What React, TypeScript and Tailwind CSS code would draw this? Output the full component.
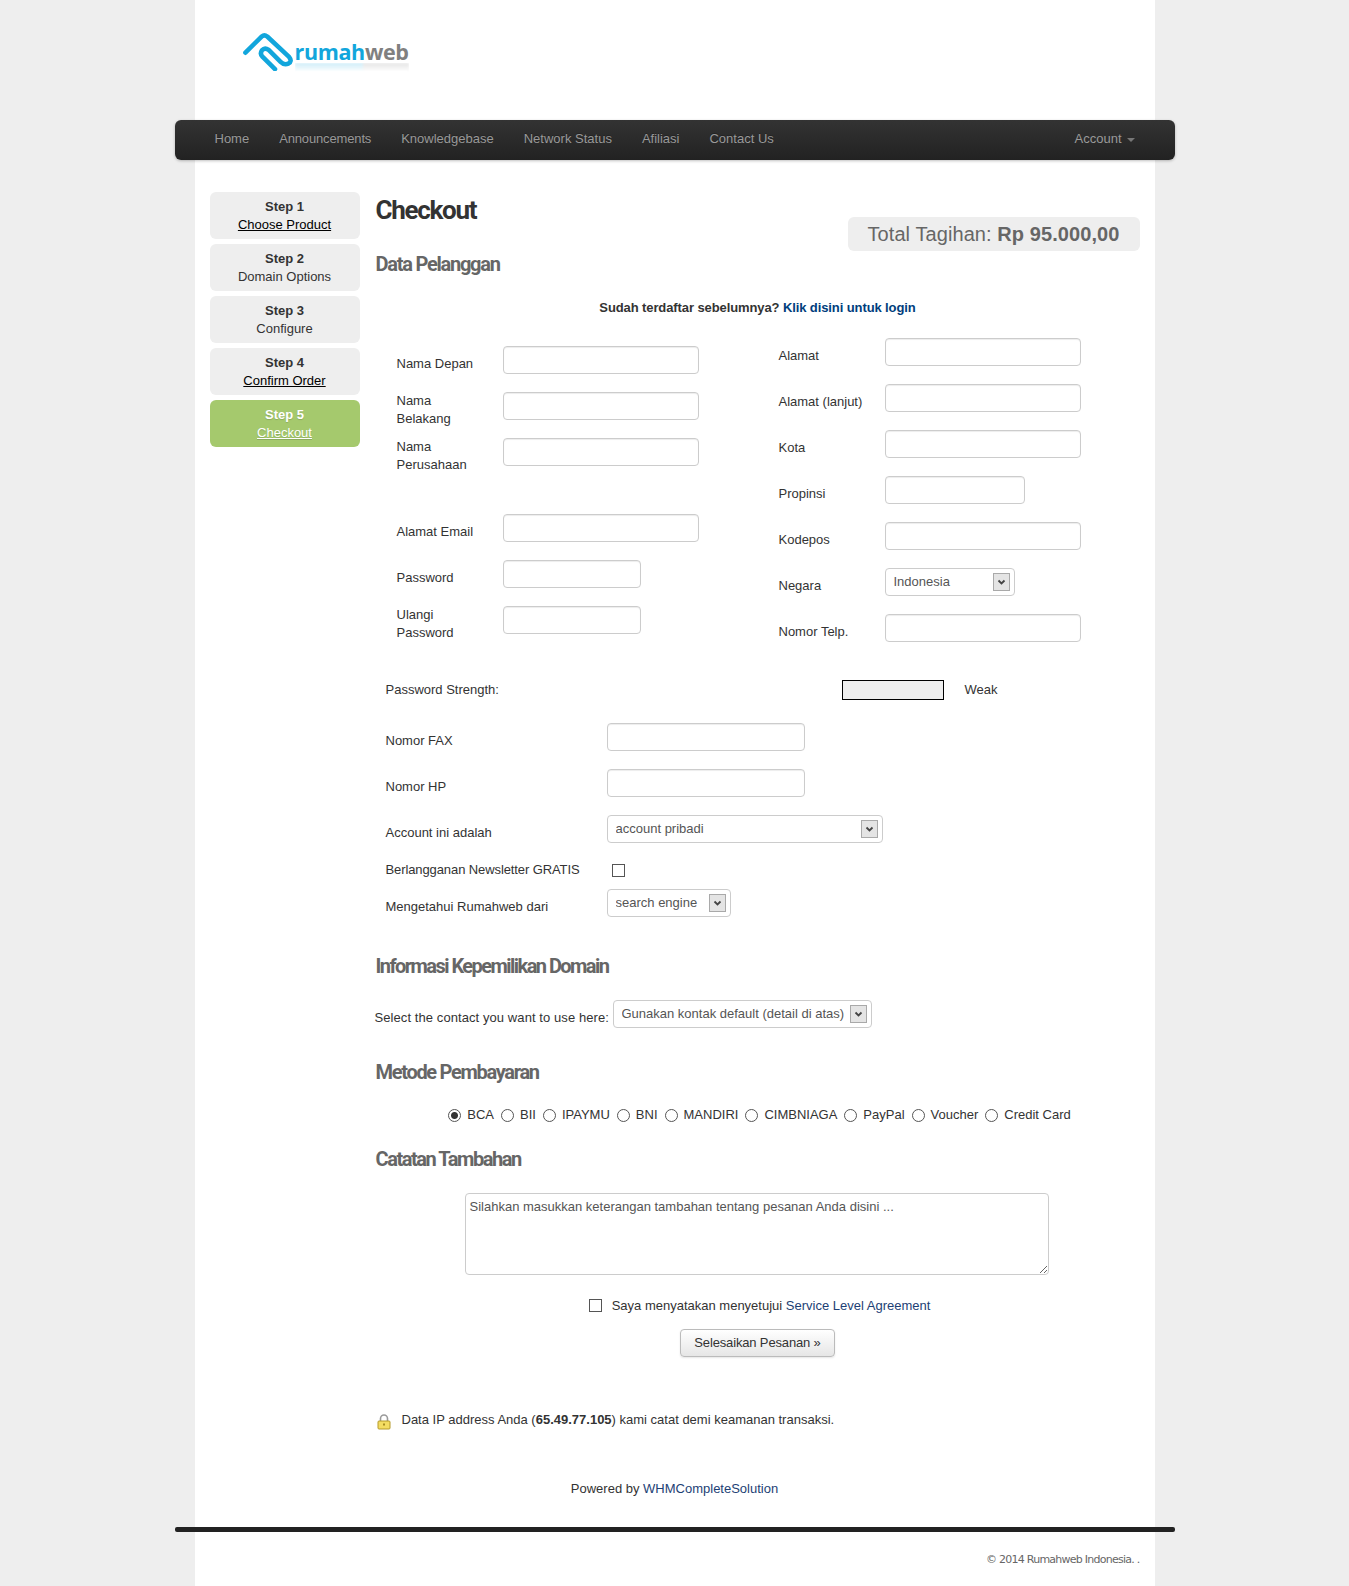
import React from "react";

const navItems = [
  { label: "Home", className: "" },
  { label: "Announcements", className: "tracking-[-0.15px]" },
  { label: "Knowledgebase", className: "" },
  { label: "Network Status", className: "" },
  { label: "Afiliasi", className: "" },
  { label: "Contact Us", className: "" },
];

const steps = [
  { title: "Step 1", label: "Choose Product", link: true },
  { title: "Step 2", label: "Domain Options", link: false },
  { title: "Step 3", label: "Configure", link: false },
  { title: "Step 4", label: "Confirm Order", link: true },
];

const payments = ["BCA", "BII", "IPAYMU", "BNI", "MANDIRI", "CIMBNIAGA", "PayPal", "Voucher", "Credit Card"];

const Heading = ({ children, className = "" }: { children: React.ReactNode; className?: string }) => (
  <h2 className={`h-6 text-[20px] leading-6 font-bold text-[#666] font-['Roboto',sans-serif] ${className}`}>
    {children}
  </h2>
);

const TextInput = ({ className = "w-[196px]" }: { className?: string }) => (
  <input
    type="text"
    className={`h-7 rounded-[4px] border border-[#ccc] bg-white px-2 shadow-[inset_0_1px_1px_rgba(0,0,0,0.075)] outline-none ${className}`}
  />
);

const Select = ({ value, className }: { value: string; className: string }) => (
  <div className={`relative h-7 shrink-0 ${className}`}>
    <select
      defaultValue={value}
      className="h-7 w-full appearance-none rounded-[4px] border border-[#ccc] bg-white pl-2 text-[13px] text-[#555] outline-none"
    >
      <option>{value}</option>
    </select>
    <span className="absolute top-[5px] right-[5px] flex h-[18px] w-[17px] items-center justify-center border border-[#a9a9a9] bg-[#e4e4e4]">
      <svg width="9" height="7" viewBox="0 0 9 7">
        <path d="M1.5 1.5 4.5 4.5 7.5 1.5" fill="none" stroke="#444" strokeWidth="1.8" />
      </svg>
    </span>
  </div>
);

const Row = ({ label, width = "w-[106px]", children }: { label: string; width?: string; children: React.ReactNode }) => (
  <div className="flex h-7 items-center">
    <label className={`${width} shrink-0 pt-[8px] pr-4`}>{label}</label>
    {children}
  </div>
);

const Logo = () => (
  <div className="flex items-start pt-[33px] pl-[48px]">
    <svg width="52" height="38" viewBox="40 40 146 108" className="shrink-0">
      <path
        d="M46 96 92 50Q100 44 108 50L170 108Q180 120 168 127 156 132 146 122L112 88Q101 80 93 89 86 100 95 108L130 143"
        fill="none"
        stroke="#12a6dc"
        strokeWidth="13"
        strokeLinecap="round"
        strokeLinejoin="round"
      />
    </svg>
    <div className="relative mt-[3px] text-[21.5px] leading-[32px] font-bold tracking-[-0.35px] font-['Open_Sans',sans-serif]">
      <span className="text-[#12a6dc]">rumah</span>
      <span className="text-[#808080]">web</span>
      {/* faded reflection under the wordmark */}
      <div className="absolute top-[27px] left-0 h-[9px] w-full bg-gradient-to-r from-[#12a6dc] from-60% to-[#808080] to-60% opacity-20 blur-[1px] [mask-image:linear-gradient(to_bottom,black,transparent)]" />
    </div>
  </div>
);

const Lock = () => (
  <svg width="14" height="16" viewBox="0 0 14 16" className="mt-[6px] shrink-0">
    <path d="M3.5 7V4.5a3.5 3.5 0 0 1 7 0V7" fill="none" stroke="#9a9a9a" strokeWidth="1.6" />
    <rect x="1" y="7" width="12" height="8" rx="1" fill="#f3dc62" stroke="#b59a2a" />
    <rect x="6" y="9.5" width="2" height="2" fill="#a88c22" />
  </svg>
);

export default function App() {
  return (
    <div className="min-h-[1586px] bg-[#eee] font-['Liberation_Sans',Arial,sans-serif] text-[13px] leading-[18px] text-[#333]">
      <div className="mx-auto h-[1586px] w-[960px] bg-white">
        <div className="h-[120px]">
          <Logo />
        </div>

        <nav className="-mx-5 flex h-10 items-center justify-between rounded-md bg-gradient-to-b from-[#333] to-[#222] px-[25px] shadow-[0_1px_3px_rgba(0,0,0,0.25)]">
          <ul className="flex pb-[2px]">
            {navItems.map((item) => (
              <li key={item.label}>
                <a href="#" className={`block px-[15px] py-[10px] text-[#999] [text-shadow:0_-1px_0_rgba(0,0,0,0.25)] ${item.className}`}>
                  {item.label}
                </a>
              </li>
            ))}
          </ul>
          <a href="#" className="flex items-center pr-[15px] pb-[2px] pl-[15px] text-[#999]">
            Account
            <span className="mt-[1px] ml-[5px] h-0 w-0 border-x-4 border-t-4 border-x-transparent border-t-[#777]" />
          </a>
        </nav>

        <div className="flex pt-8 pl-[15px]">
          {/* ------------------------steps------------------------ */}
          <aside className="flex w-[150px] shrink-0 flex-col gap-[5px]">
            {steps.map((step) => (
              <div key={step.title} className="h-[47px] rounded-md bg-[#eee] pt-[6px] text-center">
                <div className="font-bold">{step.title}</div>
                {step.link ? <a href="#" className="text-black underline">{step.label}</a> : <div>{step.label}</div>}
              </div>
            ))}
            <div className="h-[47px] rounded-md bg-[#a5c96d] pt-[6px] text-center text-white [text-shadow:0_1px_1px_rgba(0,0,0,0.15)]">
              <div className="font-bold">Step 5</div>
              <a href="#" className="underline">Checkout</a>
            </div>
          </aside>

          <main className="ml-4 flex w-[764px] flex-col">
            <div className="flex h-[59px] items-start justify-between">
              <h1 className="text-[26px] leading-9 font-bold tracking-[-1.3px] text-[#333] font-['Roboto',sans-serif]">Checkout</h1>
              <div className="mt-[25px] flex h-[34px] w-[292px] items-center justify-center rounded-md bg-[#eee] text-[20px] tracking-[0.08px] text-[#666]">
                <span>
                  Total Tagihan: <b>Rp 95.000,00</b>
                </span>
              </div>
            </div>

            <Heading className="mt-px tracking-[-1.25px]">Data Pelanggan</Heading>

            <p className="mt-[23px] text-center font-bold tracking-[-0.1px]">
              Sudah terdaftar sebelumnya? <a href="#" className="text-[#003d7c]">Klik disini untuk login</a>
            </p>

            <div className="mt-[21px] flex">
              <div className="ml-[21px] flex w-[382px] flex-col gap-[18px] pt-2">
                <Row label="Nama Depan"><TextInput /></Row>
                <Row label="Nama Belakang"><TextInput /></Row>
                <Row label="Nama Perusahaan"><TextInput /></Row>
                <div className="mt-[30px]">
                  <Row label="Alamat Email"><TextInput /></Row>
                </div>
                <Row label="Password"><TextInput className="w-[138px]" /></Row>
                <Row label="Ulangi Password"><TextInput className="w-[138px]" /></Row>
              </div>
              <div className="flex flex-col gap-[18px]">
                <Row label="Alamat"><TextInput /></Row>
                <Row label="Alamat (lanjut)"><TextInput /></Row>
                <Row label="Kota"><TextInput /></Row>
                <Row label="Propinsi"><TextInput className="w-[140px]" /></Row>
                <Row label="Kodepos"><TextInput /></Row>
                <Row label="Negara"><Select value="Indonesia" className="w-[130px]" /></Row>
                <Row label="Nomor Telp."><TextInput /></Row>
              </div>
            </div>

            <div className="mt-[38px] ml-[10px] flex h-5 items-center">
              <span className="w-[456px]">Password Strength:</span>
              <span className="h-5 w-[102px] border border-black bg-[#eee]" />
              <span className="ml-[21px]">Weak</span>
            </div>

            <div className="mt-[23px] ml-[10px] flex flex-col">
              <div className="flex flex-col gap-[18px]">
                <Row label="Nomor FAX" width="w-[221px]"><TextInput className="w-[198px]" /></Row>
                <Row label="Nomor HP" width="w-[221px]"><TextInput className="w-[198px]" /></Row>
                <Row label="Account ini adalah" width="w-[221px]"><Select value="account pribadi" className="w-[276px]" /></Row>
              </div>
              <div className="mt-[18px] flex h-[18px] items-center">
                <label className="w-[226px] shrink-0 tracking-[-0.1px]">Berlangganan Newsletter GRATIS</label>
                <input type="checkbox" className="h-[13px] w-[13px] appearance-none border border-[#555] bg-white" />
              </div>
              <div className="mt-[10px]">
                <Row label="Mengetahui Rumahweb dari" width="w-[221px]"><Select value="search engine" className="w-[124px]" /></Row>
              </div>
            </div>

            <Heading className="mt-[37px] tracking-[-1.55px]">Informasi Kepemilikan Domain</Heading>

            <div className="mt-[22px] -ml-px flex items-center">
              <label className="w-[238px] shrink-0 pt-[8px] tracking-[0.08px]">Select the contact you want to use here:</label>
              <Select value="Gunakan kontak default (detail di atas)" className="w-[259px]" />
            </div>

            <Heading className="mt-[32px] tracking-[-1.3px]">Metode Pembayaran</Heading>

            <div className="mt-[22px] flex h-[18px] items-center justify-center gap-[7px] pl-[4px]">
              {payments.map((name, i) => (
                <label key={name} className="flex items-center gap-[6px]">
                  <input
                    type="radio"
                    name="payment"
                    defaultChecked={i === 0}
                    className="h-[13px] w-[13px] appearance-none rounded-full border border-[#555] bg-white checked:bg-[radial-gradient(circle,#333_0,#333_3px,#fff_4px)]"
                  />
                  {name}
                </label>
              ))}
            </div>

            <Heading className="mt-[23px] tracking-[-1.45px]">Catatan Tambahan</Heading>

            <textarea
              defaultValue="Silahkan masukkan keterangan tambahan tentang pesanan Anda disini ..."
              className="mt-[22px] ml-[89px] h-[82px] w-[584px] rounded-[4px] border border-[#ccc] px-1 py-1 text-[13px] text-[#555] outline-none"
            />

            <div className="mt-[21px] flex h-[18px] items-center justify-center pl-1">
              <input type="checkbox" className="h-[13px] w-[13px] appearance-none border border-[#555] bg-white" />
              <span className="ml-[10px] pt-[2px]">
                Saya menyatakan menyetujui <a href="#" className="text-[#1d3f75]">Service Level Agreement</a>
              </span>
            </div>

            <button className="mx-auto mt-[15px] h-7 w-[155px] rounded-[4px] border border-[#bbb] bg-gradient-to-b from-white to-[#e6e6e6] text-[13px] tracking-[-0.15px] text-[#333] shadow-[0_1px_2px_rgba(0,0,0,0.1)]">
              Selesaikan Pesanan »
            </button>

            <div className="mt-[53px] flex h-[18px] items-center pl-[1px]">
              <Lock />
              <span className="ml-[11px] pt-[2px]">
                Data IP address Anda (<b>65.49.77.105</b>) kami catat demi keamanan transaksi.
              </span>
            </div>
          </main>
        </div>

        <p className="mt-[52px] text-center">
          Powered by <a href="#" className="text-[#1d3f75]">WHMCompleteSolution</a>
        </p>

        <div className="-mx-5 mt-[29px] h-[5px] rounded-[2px] bg-[#222]" />

        <p className="mt-[19px] pr-[15px] text-right font-['DejaVu_Sans',sans-serif] text-[11px] tracking-[-0.75px] text-[#666]">
          © 2014 Rumahweb Indonesia. .
        </p>
      </div>
    </div>
  );
}
